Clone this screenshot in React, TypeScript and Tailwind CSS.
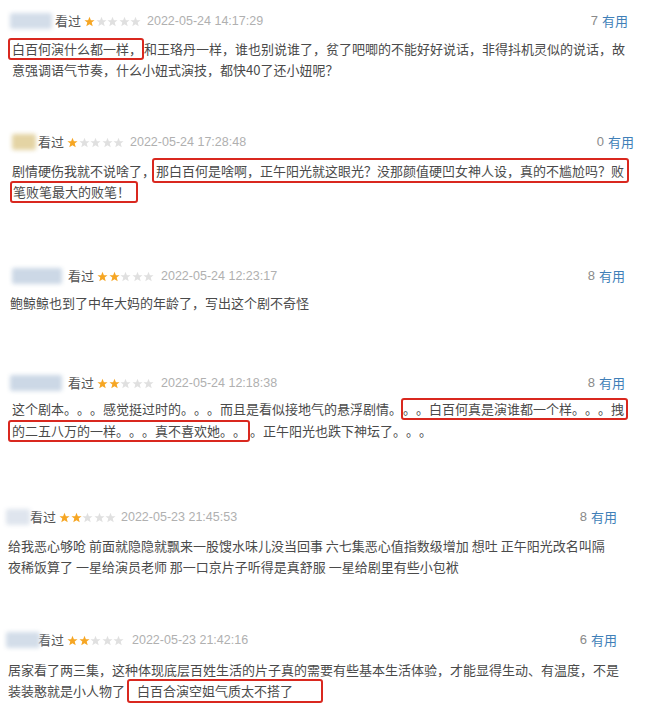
import type { ReactNode } from "react";

const CJK = "font-['Noto_Sans_CJK_SC','Noto_Sans',sans-serif]";
const LAT = "font-['Liberation_Sans','Noto_Sans_CJK_SC',sans-serif]";

function Star({ on }: { on: boolean }) {
  return (
    <svg width="11" height="11" viewBox="0 0 24 24" className="shrink-0">
      <polygon
        points="12,1.5 15,9 23,9.3 16.8,14.3 19,22.3 12,17.8 5,22.3 7.2,14.3 1,9.3 9,9"
        fill={on ? "#f6a623" : "#e0e0e0"}
      />
    </svg>
  );
}

// 红框标注
function Box({ children, cls = "" }: { children: ReactNode; cls?: string }) {
  return (
    <span className={`inline-flex items-center h-[22px] border-2 border-[#d9281f] rounded-[3px] ${cls}`}>
      {children}
    </span>
  );
}

function Line({ children, cls = "" }: { children: ReactNode; cls?: string }) {
  return <div className={`flex items-center h-[21px] whitespace-pre ${cls}`}>{children}</div>;
}

interface Head {
  blob: string;
  kan: string;
  stars: number;
  date: string;
  dateMl: string;
  useful: number;
  right: string;
}

function Header({ h }: { h: Head }) {
  return (
    <div className="flex items-center h-[20px]">
      <div className={`h-[16px] rounded-[2px] blur-[2px] ${h.blob}`} />
      <span className={`${CJK} text-[13px] text-[#555] ${h.kan}`}>看过</span>
      <span className="flex ml-[3px] gap-[0.5px]">
        {[0, 1, 2, 3, 4].map((i) => (
          <Star key={i} on={i < h.stars} />
        ))}
      </span>
      <span className={`${LAT} text-[12.5px] text-[#b0b0b0] ${h.dateMl}`}>{h.date}</span>
      <span className={`ml-auto flex items-center ${h.right}`}>
        <span className={`${LAT} text-[13px] text-[#8a8a8a]`}>{h.useful}</span>
        <span className={`${CJK} text-[13px] text-[#3f7fb8] ml-[4px]`}>有用</span>
      </span>
    </div>
  );
}

export default function App() {
  return (
    <div className={`w-[660px] h-[712px] bg-white overflow-hidden ${CJK} text-[13px] text-[#4a4a4a] [text-spacing-trim:space-all]`}>
      {/* 1 */}
      <div className="pt-[11px]">
        <Header
          h={{
            blob: "w-[42px] ml-[10px] bg-[#d3dde9]",
            kan: "ml-[3px]",
            stars: 1,
            date: "2022-05-24 14:17:29",
            dateMl: "ml-[6px]",
            useful: 7,
            right: "mr-[32px]",
          }}
        />
        <div className="mt-[7px]">
          <Line cls="pl-[8px]">
            <Box cls="pl-[2px] pr-0">白百何演什么都一样，</Box>
            <span>和王珞丹一样，谁也别说谁了，贫了吧唧的不能好好说话，非得抖机灵似的说话，故</span>
          </Line>
          <Line cls="pl-[12px]">意强调语气节奏，什么小妞式演技，都快40了还小妞呢？</Line>
        </div>
      </div>

      {/* 2 */}
      <div className="pt-[52px]">
        <Header
          h={{
            blob: "w-[24px] ml-[12px] bg-[#e4d4a4]",
            kan: "ml-[2px]",
            stars: 1,
            date: "2022-05-24 17:28:48",
            dateMl: "ml-[6px]",
            useful: 0,
            right: "mr-[26px]",
          }}
        />
        <div className="mt-[8px]">
          <Line cls="pl-[12px]">
            <span>剧情硬伤我就不说啥了，</span>
            <Box cls="h-[25px] pl-[2px] pr-[3px] -ml-[3px]">那白百何是啥啊，正午阳光就这眼光？没那颜值硬凹女神人设，真的不尴尬吗？败</Box>
          </Line>
          <Line cls="pl-[10px]">
            <Box cls="pl-[1px] pr-[6px]">笔败笔最大的败笔！</Box>
          </Line>
        </div>
      </div>

      {/* 3 */}
      <div className="pt-[64px]">
        <Header
          h={{
            blob: "w-[50px] ml-[12px] bg-[#ccd8e6]",
            kan: "ml-[6px]",
            stars: 2,
            date: "2022-05-24 12:23:17",
            dateMl: "ml-[7px]",
            useful: 8,
            right: "mr-[35px]",
          }}
        />
        <div className="mt-[6px]">
          <Line cls="pl-[10px]">鲍鲸鲸也到了中年大妈的年龄了，写出这个剧不奇怪</Line>
        </div>
      </div>

      {/* 4 */}
      <div className="pt-[60px]">
        <Header
          h={{
            blob: "w-[52px] ml-[10px] bg-[#ccd8e6]",
            kan: "ml-[6px]",
            stars: 2,
            date: "2022-05-24 12:18:38",
            dateMl: "ml-[7px]",
            useful: 8,
            right: "mr-[35px]",
          }}
        />
        <div className="mt-[5px]">
          <Line cls="pl-[12px]">
            <span>这个剧本。。。感觉挺过时的。。。而且是看似接地气的悬浮剧情。</span>
            <Box cls="pl-0 pr-[2px] -ml-[1px]">。。白百何真是演谁都一个样。。。拽</Box>
          </Line>
          <Line cls="pl-[8px] mt-[1px]">
            <Box cls="pl-[2px] pr-[2px]">的二五八万的一样。。。真不喜欢她。。</Box>
            <span>。正午阳光也跌下神坛了。。。</span>
          </Line>
        </div>
      </div>

      {/* 5 */}
      <div className="pt-[66px]">
        <Header
          h={{
            blob: "w-[24px] ml-[6px] bg-[#dfe5ee]",
            kan: "ml-[0px]",
            stars: 2,
            date: "2022-05-23 21:45:53",
            dateMl: "ml-[5px]",
            useful: 8,
            right: "mr-[43px]",
          }}
        />
        <div className="mt-[8px]">
          <Line cls="pl-[8px]">给我恶心够呛 前面就隐隐就飘来一股馊水味儿没当回事 六七集恶心值指数级增加 想吐 正午阳光改名叫隔</Line>
          <Line cls="pl-[8px]">夜稀饭算了 一星给演员老师 那一口京片子听得是真舒服 一星给剧里有些小包袱</Line>
        </div>
      </div>

      {/* 6 */}
      <div className="pt-[53px]">
        <Header
          h={{
            blob: "w-[34px] ml-[6px] bg-[#d3dde9]",
            kan: "-ml-[2px]",
            stars: 2,
            date: "2022-05-23 21:42:16",
            dateMl: "ml-[8px]",
            useful: 6,
            right: "mr-[43px]",
          }}
        />
        <div className="mt-[9px]">
          <Line cls="pl-[8px]">居家看了两三集，这种体现底层百姓生活的片子真的需要有些基本生活体验，才能显得生动、有温度，不是</Line>
          <Line cls="pl-[8px]">
            <span>装装憨就是小人物了</span>
            <Box cls="h-[24px] pl-[8px] pr-[28px] ml-[2px]">白百合演空姐气质太不搭了</Box>
          </Line>
        </div>
      </div>
    </div>
  );
}
